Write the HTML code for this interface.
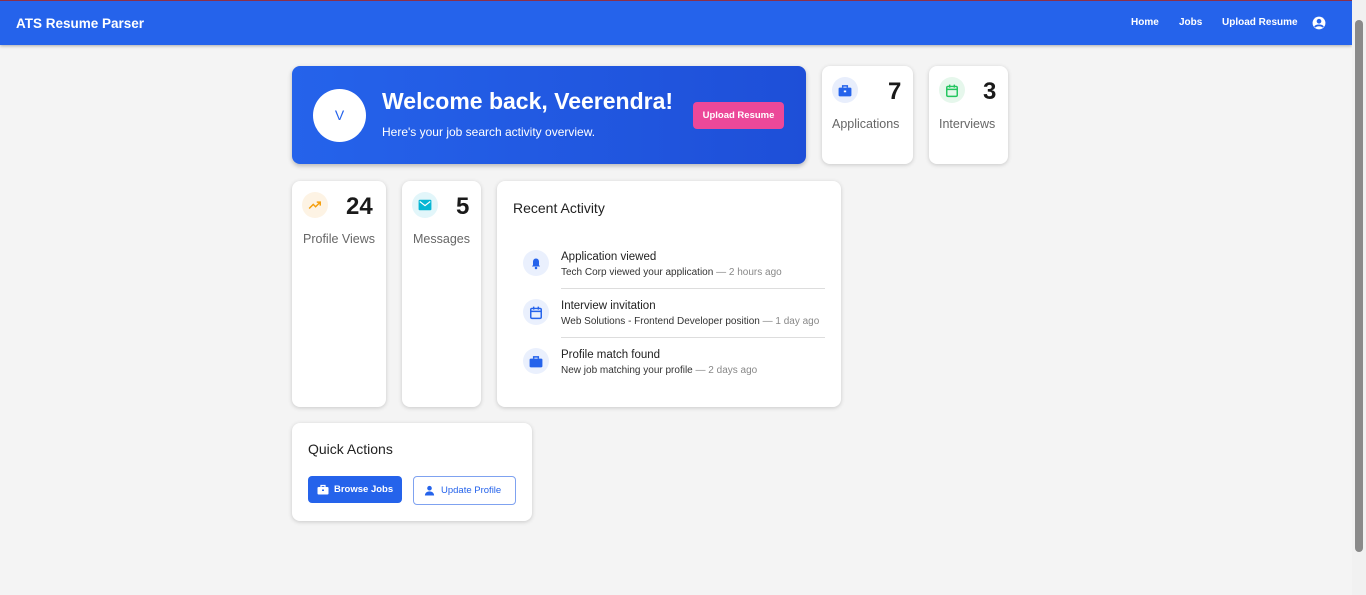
<!DOCTYPE html>
<html><head><meta charset="utf-8"><style>
*{box-sizing:border-box;margin:0;padding:0}
body{width:1366px;height:595px;overflow:hidden;background:#f4f4f4;font-family:"Liberation Sans",sans-serif;position:relative;color:#1f1f1f}
.nav{position:absolute;left:0;top:0;width:1352px;height:45px;background:#2563eb;border-top:1px solid #8b2f4a;box-shadow:0 1px 3px rgba(0,0,0,.3)}
.nav .brand{position:absolute;left:16px;top:15px;color:#fff;font-weight:bold;font-size:13.5px}
.nav a{position:absolute;top:16px;color:#fff;font-size:10px;font-weight:bold}
.sb{position:absolute;right:0;top:0;width:14px;height:595px;background:#f1f1f1}
.sb .th{position:absolute;left:3px;top:20px;width:8px;height:532px;background:#8a8a8a;border-radius:4px}
.card{position:absolute;background:#fff;border-radius:8px;box-shadow:0 1px 4px rgba(0,0,0,.18)}
.hero{left:292px;top:66px;width:514px;height:98px;background:linear-gradient(90deg,#2563eb,#1e4fd8);border-radius:8px;box-shadow:0 2px 5px rgba(0,0,0,.25)}
.av{position:absolute;left:21px;top:23px;width:53px;height:53px;border-radius:50%;background:#fff;color:#2563eb;font-size:14px;text-align:center;line-height:53px}
.ic{position:absolute;width:26px;height:26px;border-radius:50%;display:flex;align-items:center;justify-content:center}
.num{position:absolute;font-weight:bold;font-size:24px;color:#1a1a1a}
.lbl{position:absolute;font-size:12.5px;color:#666}
.it{position:absolute;left:26px;width:302px}
.it .c{position:absolute;left:0;top:0;width:26px;height:26px;border-radius:50%;background:#eaf0fd;display:flex;align-items:center;justify-content:center}
.it .t{position:absolute;left:38px;top:1px;font-size:11.5px;color:#222}
.it .s{position:absolute;left:38px;top:17px;font-size:10px;color:#333;white-space:nowrap}
.it .s span{color:#888}
</style></head><body>
<div class="nav"><div class="brand">ATS Resume Parser</div>
<a style="left:1131px">Home</a><a style="left:1179px">Jobs</a><a style="left:1222px">Upload Resume</a>
<svg style="position:absolute;left:1312px;top:15px" width="14" height="14" viewBox="0 0 24 24"><circle cx="12" cy="12" r="11" fill="#fff"/><circle cx="12" cy="9" r="4" fill="#2563eb"/><path d="M5 19c2-4 12-4 14 0" stroke="#2563eb" stroke-width="3" fill="none"/></svg></div>
<div class="sb"><div class="th"></div></div>

<div class="card hero"><div class="av">V</div>
<div style="position:absolute;left:90px;top:22px;color:#fff;font-size:23px;font-weight:bold">Welcome back, Veerendra!</div>
<div style="position:absolute;left:90px;top:59px;color:#fff;font-size:12px">Here's your job search activity overview.</div>
<div style="position:absolute;left:401px;top:36px;width:91px;height:27px;background:#ec4899;border-radius:4px;color:#fff;font-size:9.5px;font-weight:bold;text-align:center;line-height:27px">Upload Resume</div></div>

<div class="card" style="left:822px;top:66px;width:91px;height:98px">
<div class="ic" style="left:10px;top:11px;background:#e8eefc"><svg width="14" height="13" viewBox="0 0 24 22"><rect x="1" y="6" width="22" height="15" rx="2" fill="#2563eb"/><path d="M8 6V3h8v3" stroke="#2563eb" stroke-width="2.5" fill="none"/><rect x="10" y="11" width="4" height="3" fill="#fff"/></svg></div>
<div class="num" style="left:66px;top:12px">7</div><div class="lbl" style="left:10px;top:51px">Applications</div></div>
<div class="card" style="left:929px;top:66px;width:79px;height:98px">
<div class="ic" style="left:10px;top:11px;background:#e6f7ec"><svg width="14" height="15" viewBox="0 0 24 24"><rect x="3" y="5" width="18" height="17" rx="2" stroke="#22c55e" stroke-width="2.5" fill="none"/><path d="M3 10h18M8 2v5M16 2v5" stroke="#22c55e" stroke-width="2.5"/></svg></div>
<div class="num" style="left:54px;top:12px">3</div><div class="lbl" style="left:10px;top:51px">Interviews</div></div>

<div class="card" style="left:292px;top:181px;width:94px;height:226px">
<div class="ic" style="left:10px;top:11px;background:#fdf3e4"><svg width="14" height="10" viewBox="0 0 24 16"><path d="M2 14l7-7 4 4 8-8M15 3h6v6" stroke="#f59e0b" stroke-width="2.5" fill="none"/></svg></div>
<div class="num" style="left:54px;top:12px">24</div><div class="lbl" style="left:11px;top:51px">Profile Views</div></div>
<div class="card" style="left:402px;top:181px;width:79px;height:226px">
<div class="ic" style="left:10px;top:11px;background:#e2f6fa"><svg width="14" height="12" viewBox="0 0 24 20"><rect x="1" y="1" width="22" height="18" rx="2" fill="#06b6d4"/><path d="M3 4l9 7 9-7" stroke="#fff" stroke-width="2" fill="none"/></svg></div>
<div class="num" style="left:54px;top:12px">5</div><div class="lbl" style="left:11px;top:51px">Messages</div></div>

<div class="card" style="left:497px;top:181px;width:344px;height:226px">
<div style="position:absolute;left:16px;top:19px;font-size:14px;color:#222">Recent Activity</div>
<div class="it" style="top:69px"><div class="c"><svg width="12" height="13" viewBox="0 0 24 24"><path d="M12 2c-4 0-6 3-6 7v6l-2 3h16l-2-3V9c0-4-2-7-6-7z" fill="#2563eb"/><circle cx="12" cy="21" r="2.5" fill="#2563eb"/></svg></div><div class="t">Application viewed</div><div class="s">Tech Corp viewed your application <span>— 2 hours ago</span></div></div>
<div style="position:absolute;left:64px;top:107px;width:264px;height:1px;background:#ddd"></div>
<div class="it" style="top:118px"><div class="c"><svg width="14" height="15" viewBox="0 0 24 24"><rect x="3" y="5" width="18" height="17" rx="2" stroke="#2563eb" stroke-width="2.5" fill="none"/><path d="M3 10h18M8 2v5M16 2v5" stroke="#2563eb" stroke-width="2.5"/></svg></div><div class="t">Interview invitation</div><div class="s">Web Solutions - Frontend Developer position <span>— 1 day ago</span></div></div>
<div style="position:absolute;left:64px;top:156px;width:264px;height:1px;background:#ddd"></div>
<div class="it" style="top:167px"><div class="c"><svg width="14" height="13" viewBox="0 0 24 22"><rect x="1" y="6" width="22" height="15" rx="2" fill="#2563eb"/><path d="M8 6V3h8v3" stroke="#2563eb" stroke-width="2.5" fill="none"/></svg></div><div class="t">Profile match found</div><div class="s">New job matching your profile <span>— 2 days ago</span></div></div>
</div>

<div class="card" style="left:292px;top:423px;width:240px;height:98px">
<div style="position:absolute;left:16px;top:18px;font-size:14px;color:#222">Quick Actions</div>
<div style="position:absolute;left:16px;top:53px;width:94px;height:27px;background:#2563eb;border-radius:4px;color:#fff;font-size:9.5px;font-weight:bold;line-height:27px;padding-left:26px"><svg style="position:absolute;left:9px;top:8px" width="12" height="11" viewBox="0 0 24 22"><rect x="1" y="6" width="22" height="15" rx="2" fill="#fff"/><path d="M8 6V3h8v3" stroke="#fff" stroke-width="2.5" fill="none"/><rect x="10" y="11" width="4" height="3" fill="#2563eb"/></svg>Browse Jobs</div>
<div style="position:absolute;left:121px;top:53px;width:103px;height:29px;border:1px solid #7fa2f0;border-radius:4px;color:#2563eb;font-size:9.5px;line-height:27px;padding-left:27px"><svg style="position:absolute;left:10px;top:8px" width="11" height="11" viewBox="0 0 24 24"><circle cx="12" cy="7" r="5" fill="#2563eb"/><path d="M2 23c0-6 5-9 10-9s10 3 10 9z" fill="#2563eb"/></svg>Update Profile</div>
</div>
</body></html>
